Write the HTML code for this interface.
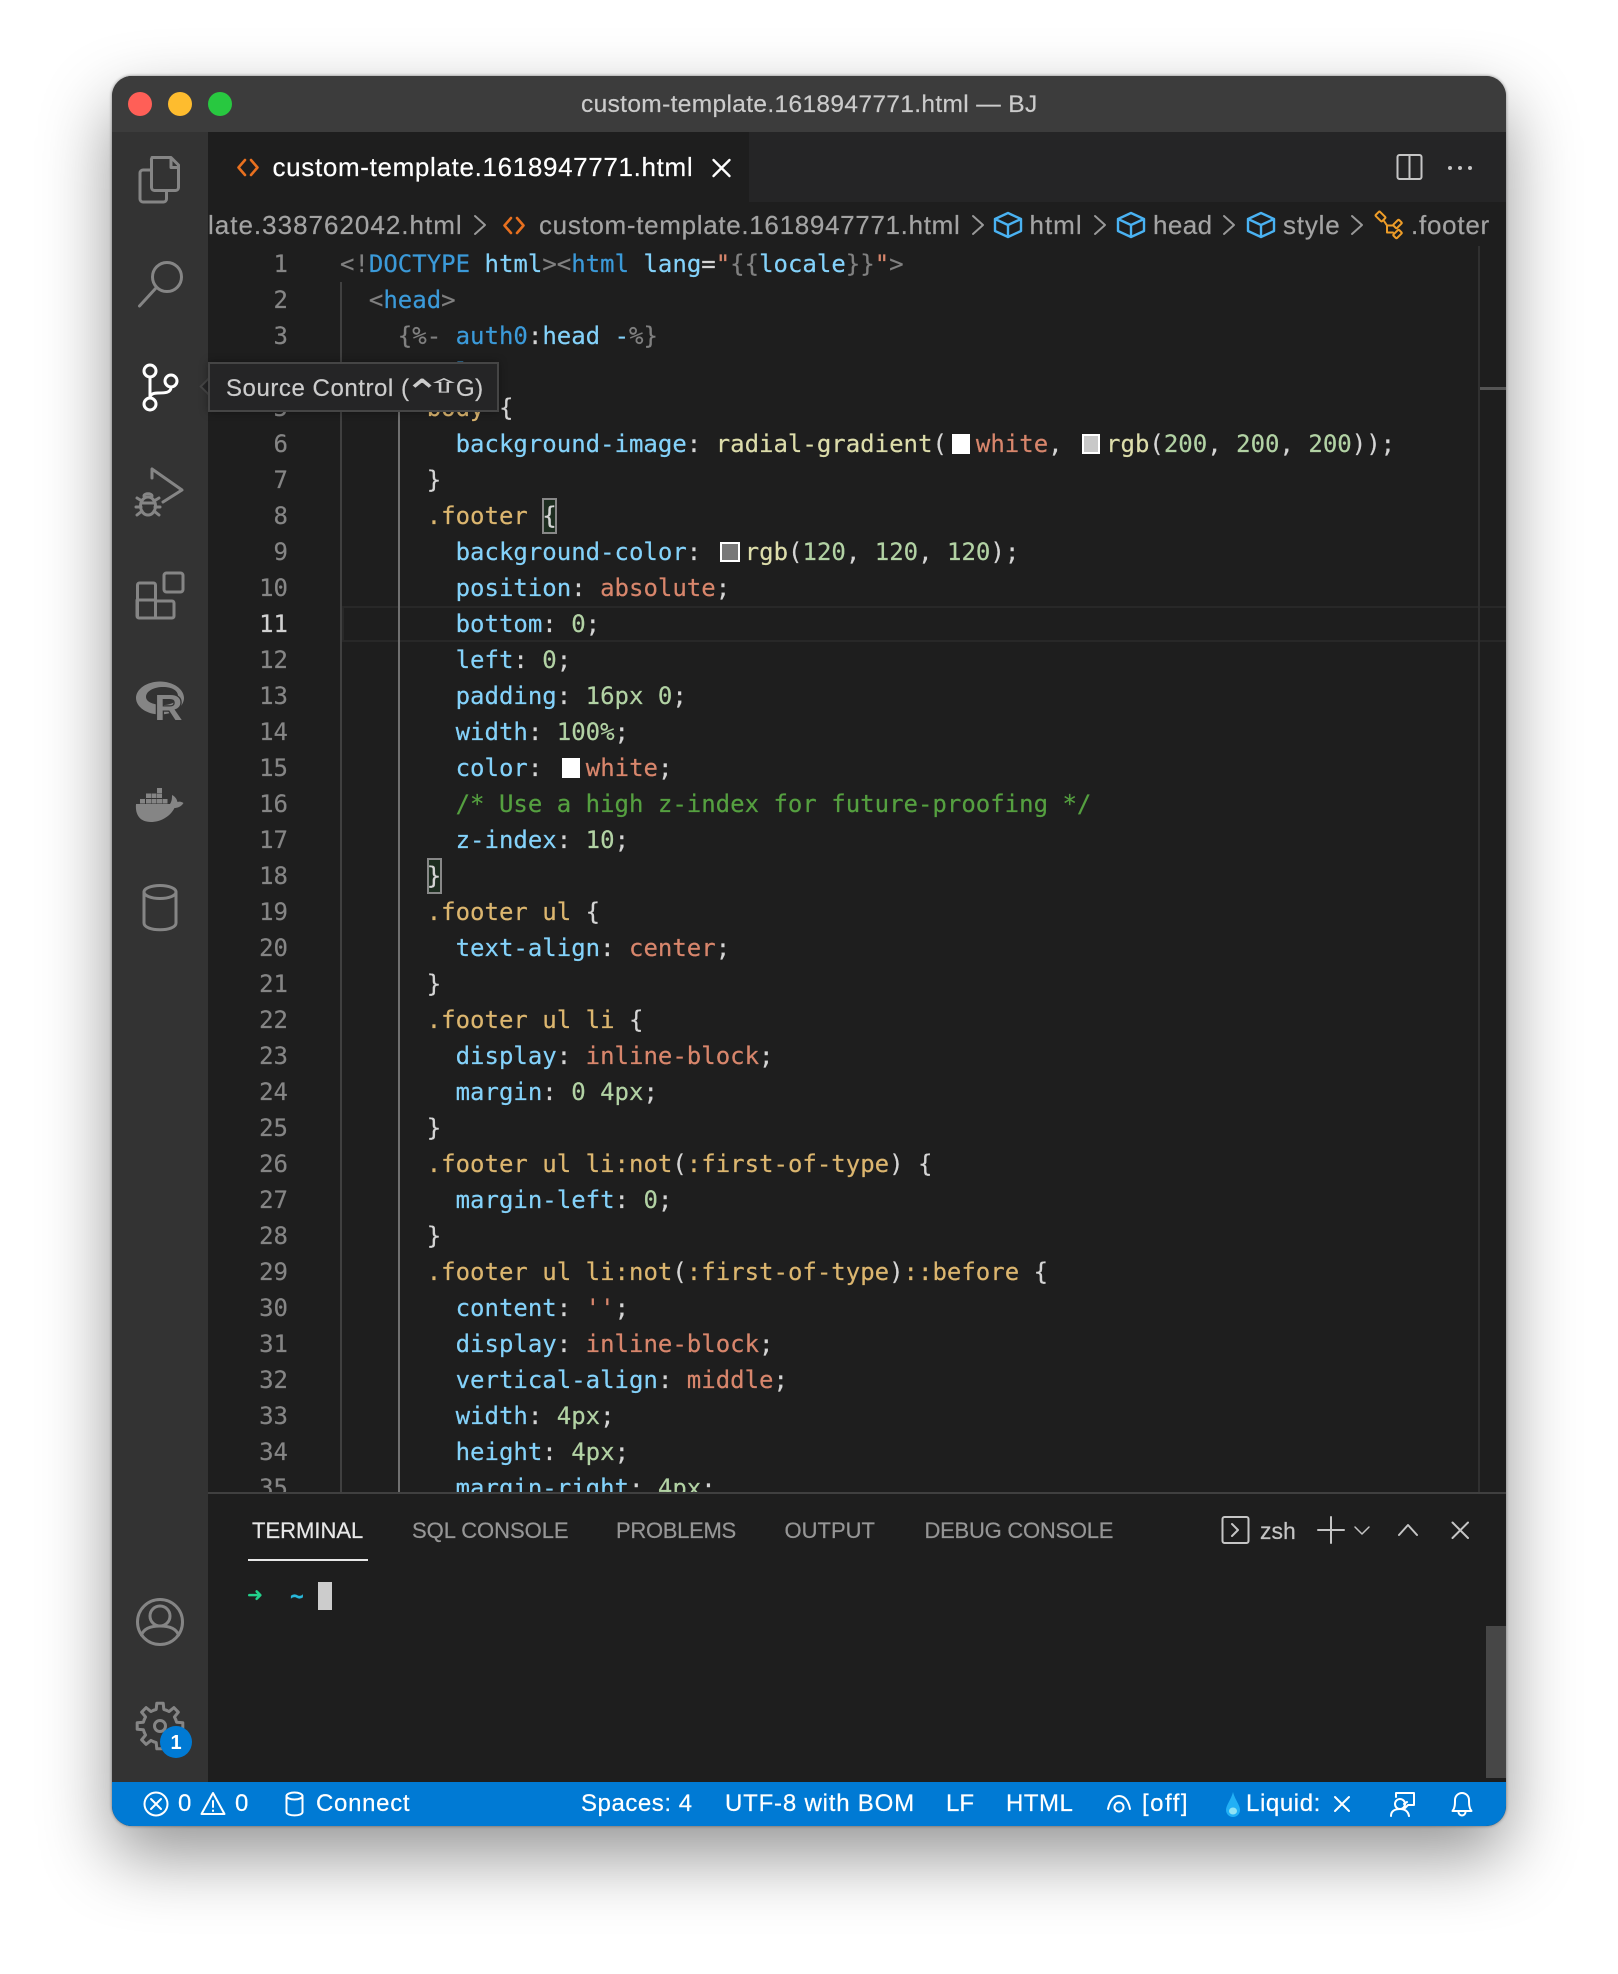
<!DOCTYPE html>
<html lang="en">
<head>
<meta charset="utf-8">
<title>custom-template.1618947771.html — BJ</title>
<style>
html,body{margin:0;padding:0;background:#fff}
body{position:relative;width:1618px;height:1974px;overflow:hidden;font-family:"Liberation Sans",sans-serif}
.a{position:absolute}
#win{left:112px;top:76px;width:1394px;height:1750px;border-radius:20px;background:#1e1e1e;box-shadow:0 30px 70px rgba(0,0,0,.42),0 0 3px rgba(0,0,0,.45)}
.t{position:absolute;white-space:pre;line-height:30px;height:30px;-webkit-text-stroke:.2px}
pre{margin:0;font:24px/36px "DejaVu Sans Mono","Liberation Mono",monospace;font-variant-ligatures:none;-webkit-text-stroke:.2px}
.k{color:#808080}.b{color:#3b9ad9}.l{color:#84d2fa}.w{color:#d4d4d4}.o{color:#d8866c}.n{color:#b2d2a4}.f{color:#dcdcaa}.s{color:#dcb66f}.g{color:#55a040}
.sw{display:inline-block;box-sizing:border-box;width:18px;height:20px;margin:0 6px 0 5px;border:2px solid #fff;vertical-align:-2px}
.u{color:#a3a3a3;font-size:26px}
.st{color:#fff;font-size:24px}
.p{color:#969696;font-size:22px}
</style>
</head>
<body>
<div class="a" id="win"></div>

<div class="a" style="left:112px;top:76px;width:1394px;height:1750px;border-radius:20px;overflow:hidden">
  <div class="a" style="left:0;top:0;width:1394px;height:56px;background:#3c3c3c"></div>
  <div class="a" style="left:0;top:56px;width:96px;height:1650px;background:#333"></div>
  <div class="a" style="left:96px;top:56px;width:1298px;height:70px;background:#252526"></div>
  <div class="a" style="left:96px;top:56px;width:541px;height:70px;background:#1e1e1e"></div>
  <div class="a" style="left:0;top:1706px;width:1394px;height:44px;background:#007ad4"></div>
</div>

<!-- title -->
<div class="t" style="left:581px;top:90px;font-size:24.5px;letter-spacing:.35px;color:#cbcbcb">custom-template.1618947771.html — BJ</div>
<!-- tab -->
<div class="t" style="left:272.500px;top:152px;font-size:26px;letter-spacing:.66px;color:#fff">custom-template.1618947771.html</div>

<!-- breadcrumbs -->
<div class="a" style="left:208px;top:202px;width:1298px;height:44px;overflow:hidden">
  <div class="t u" style="left:0;top:8px;letter-spacing:1px">late.338762042.html</div>
  <div class="t u" style="left:331px;top:8px;letter-spacing:.68px">custom-template.1618947771.html</div>
  <div class="t u" style="left:821.500px;top:8px;letter-spacing:1px">html</div>
  <div class="t u" style="left:945px;top:8px;letter-spacing:.4px">head</div>
  <div class="t u" style="left:1075px;top:8px;letter-spacing:.8px">style</div>
  <div class="t u" style="left:1203px;top:8px;letter-spacing:.75px">.footer</div>
</div>

<!-- editor -->
<div class="a" style="left:208px;top:246px;width:1298px;height:1246px;overflow:hidden;background:#1e1e1e">
  <div class="a" style="left:134px;top:360px;width:1164px;height:36px;box-sizing:border-box;border:2px solid #282828;border-right:0"></div>
  <div class="a" style="left:132px;top:36px;width:2px;height:1210px;background:#404040"></div>
  <div class="a" style="left:190px;top:144px;width:2px;height:1102px;background:#707070"></div>
  <div class="a" style="left:334px;top:252px;width:14.5px;height:36px;box-sizing:border-box;border:2px solid #888;background:#1c2d1f"></div>
  <div class="a" style="left:219px;top:612px;width:15px;height:36px;box-sizing:border-box;border:2px solid #888;background:#1c2d1f"></div>
  <div class="a" style="left:1270px;top:0;width:2px;height:1246px;background:#303030"></div>
  <div class="a" style="left:1272px;top:141px;width:26px;height:3px;background:#555"></div>
  <pre class="a" style="left:0;top:0;width:80px;text-align:right;color:#858585">1
2
3
4
5
6
7
8
9
10
<span style="color:#d0d0d0">11</span>
12
13
14
15
16
17
18
19
20
21
22
23
24
25
26
27
28
29
30
31
32
33
34
35</pre>
  <pre class="a" style="left:132px;top:0;color:#d4d4d4"><span class="k">&lt;!</span><span class="b">DOCTYPE</span> <span class="l">html</span><span class="k">&gt;&lt;</span><span class="b">html</span> <span class="l">lang</span>=<span class="o">"</span><span class="k">{{</span><span class="l">locale</span><span class="k">}}</span><span class="o">"</span><span class="k">&gt;</span>
  <span class="k">&lt;</span><span class="b">head</span><span class="k">&gt;</span>
    <span class="k">{%-</span> <span class="b">auth0</span>:<span class="l">head</span> <span class="l">-</span><span class="k">%}</span>
    <span class="k">&lt;</span><span class="b">style</span><span class="k">&gt;</span>
      <span class="s">body</span> {
        <span class="l">background-image</span>: <span class="f">radial-gradient</span>(<i class="sw" style="background:#fff"></i><span class="o">white</span>, <i class="sw" style="background:#c8c8c8"></i><span class="f">rgb</span>(<span class="n">200</span>, <span class="n">200</span>, <span class="n">200</span>));
      }
      <span class="s">.footer</span> {
        <span class="l">background-color</span>: <i class="sw" style="background:#787878;width:20px;margin:0 5px 0 4px"></i><span class="f">rgb</span>(<span class="n">120</span>, <span class="n">120</span>, <span class="n">120</span>);
        <span class="l">position</span>: <span class="o">absolute</span>;
        <span class="l">bottom</span>: <span class="n">0</span>;
        <span class="l">left</span>: <span class="n">0</span>;
        <span class="l">padding</span>: <span class="n">16px</span> <span class="n">0</span>;
        <span class="l">width</span>: <span class="n">100%</span>;
        <span class="l">color</span>: <i class="sw" style="background:#fff"></i><span class="o">white</span>;
        <span class="g">/* Use a high z-index for future-proofing */</span>
        <span class="l">z-index</span>: <span class="n">10</span>;
      }
      <span class="s">.footer ul</span> {
        <span class="l">text-align</span>: <span class="o">center</span>;
      }
      <span class="s">.footer ul li</span> {
        <span class="l">display</span>: <span class="o">inline-block</span>;
        <span class="l">margin</span>: <span class="n">0</span> <span class="n">4px</span>;
      }
      <span class="s">.footer ul li:not</span>(<span class="s">:first-of-type</span>) {
        <span class="l">margin-left</span>: <span class="n">0</span>;
      }
      <span class="s">.footer ul li:not</span>(<span class="s">:first-of-type</span>)<span class="s">::before</span> {
        <span class="l">content</span>: <span class="o">''</span>;
        <span class="l">display</span>: <span class="o">inline-block</span>;
        <span class="l">vertical-align</span>: <span class="o">middle</span>;
        <span class="l">width</span>: <span class="n">4px</span>;
        <span class="l">height</span>: <span class="n">4px</span>;
        <span class="l">margin-right</span>: <span class="n">4px</span>;</pre>
</div>

<!-- panel -->
<div class="a" style="left:208px;top:1492px;width:1298px;height:2px;background:#404040"></div>
<div class="a" style="left:1486px;top:1626px;width:20px;height:152px;background:#474747"></div>
<div class="t p" style="left:252px;top:1516px;color:#e7e7e7">TERMINAL</div>
<div class="a" style="left:248px;top:1559px;width:120px;height:2px;background:#e7e7e7"></div>
<div class="t p" style="left:412px;top:1516px;letter-spacing:-.03px">SQL CONSOLE</div>
<div class="t p" style="left:616px;top:1516px;letter-spacing:-.3px">PROBLEMS</div>
<div class="t p" style="left:784.500px;top:1516px">OUTPUT</div>
<div class="t p" style="left:924.500px;top:1516px;letter-spacing:-.25px">DEBUG CONSOLE</div>
<div class="t" style="left:1260px;top:1516px;font-size:23px;color:#c5c5c5">zsh</div>
<div class="t" style="left:247px;top:1580px;font:19px/30px 'DejaVu Sans',sans-serif;color:#23d18b">➜</div>
<div class="t" style="left:290px;top:1582px;font:bold 23px/30px 'DejaVu Sans Mono',monospace;color:#29b8db">~</div>
<div class="a" style="left:318px;top:1582px;width:14px;height:28px;background:#ccc"></div>

<!-- status bar text -->
<div class="t st" style="left:178px;top:1789px">0</div>
<div class="t st" style="left:235px;top:1789px">0</div>
<div class="t st" style="left:316px;top:1789px;letter-spacing:.7px">Connect</div>
<div class="t st" style="left:581px;top:1789px;letter-spacing:.55px">Spaces: 4</div>
<div class="t st" style="left:725px;top:1789px;letter-spacing:.8px">UTF-8 with BOM</div>
<div class="t st" style="left:946px;top:1789px">LF</div>
<div class="t st" style="left:1006px;top:1789px;letter-spacing:.5px">HTML</div>
<div class="t st" style="left:1142px;top:1789px;letter-spacing:1.500px">[off]</div>
<div class="t st" style="left:1246px;top:1789px;letter-spacing:.6px">Liquid:</div>

<!-- icons -->
<svg class="a" style="left:0;top:0" width="1618" height="1974" viewBox="0 0 1618 1974" fill="none" stroke-linecap="round" stroke-linejoin="round">
  <circle cx="140" cy="104" r="12" fill="#ff5f57"/>
  <circle cx="180" cy="104" r="12" fill="#febc2e"/>
  <circle cx="220" cy="104" r="12" fill="#28c840"/>

  <g stroke="#858585" stroke-width="3">
    <!-- explorer -->
    <path d="M152 157.5H171L178.5 165V187.500a3 3 0 0 1-3 3H154.500a3 3 0 0 1-3-3V160.500a3 3 0 0 1 1-3Z"/>
    <path d="M171 158V167.500H178"/>
    <path d="M151 170H143a3 3 0 0 0-3 3V199a3 3 0 0 0 3 3H163.500a3 3 0 0 0 3-3V191"/>
    <!-- search -->
    <circle cx="167" cy="277" r="14.500"/>
    <path d="M156 288L139.500 306"/>
    <!-- debug -->
    <path d="M152 469V478M163 502L182 490L152 469"/>
    <ellipse cx="148" cy="506" rx="7.500" ry="9"/>
    <path d="M141 503H155M137 498L142 501M159 498L154 501M136 507H141M160 507H155M137 515L142 511M159 515L154 511M144 496C144 493 152 493 152 496"/>
    <!-- extensions -->
    <rect x="164" y="573" width="19" height="19" rx="2.500"/>
    <path d="M155.500 600H139a2 2 0 0 0-2-0V616a2 2 0 0 0 2 2H172a2 2 0 0 0 2-2V603a2 2 0 0 0-2-2H155.500V585a2 2 0 0 0-2-2H139.500a2 2 0 0 0-2 2V616M155.500 600V618"/>
    <!-- db -->
    <ellipse cx="160" cy="892" rx="16" ry="6.500"/>
    <path d="M144 892V923C144 932 176 932 176 923V892"/>
    <!-- account -->
    <circle cx="160" cy="1622" r="22.500"/>
    <circle cx="160" cy="1616" r="10"/>
    <path d="M141.500 1635C144 1628 151 1626 160 1626C169 1626 176 1628 178.500 1635"/>
    <!-- gear -->
    <g transform="translate(160 1726)">
      <path d="M-6.500-15.700L-3.800-16.600L-3.200-22.800H3.200L3.800-16.600L6.500-15.700"/>
      <path transform="rotate(45)" d="M-6.500-15.700L-3.800-16.600L-3.200-22.800H3.200L3.800-16.600L6.500-15.700"/>
      <path transform="rotate(90)" d="M-6.500-15.700L-3.800-16.600L-3.200-22.800H3.200L3.800-16.600L6.500-15.700"/>
      <path transform="rotate(135)" d="M-6.500-15.700L-3.800-16.600L-3.200-22.800H3.200L3.800-16.600L6.500-15.700"/>
      <path transform="rotate(180)" d="M-6.500-15.700L-3.800-16.600L-3.200-22.800H3.200L3.800-16.600L6.500-15.700"/>
      <path transform="rotate(225)" d="M-6.500-15.700L-3.800-16.600L-3.200-22.800H3.200L3.800-16.600L6.500-15.700"/>
      <path transform="rotate(270)" d="M-6.500-15.700L-3.800-16.600L-3.200-22.800H3.200L3.800-16.600L6.500-15.700"/>
      <path transform="rotate(315)" d="M-6.500-15.700L-3.800-16.600L-3.200-22.800H3.200L3.800-16.600L6.500-15.700"/>
      <circle r="5.500"/>
    </g>
  </g>

  <!-- source control -->
  <g stroke="#fff" stroke-width="3">
    <circle cx="150" cy="371" r="6"/>
    <circle cx="171" cy="381" r="6"/>
    <circle cx="150" cy="404" r="6"/>
    <path d="M150 377V398M171 387C171 393 165 393 158 393C154 393 150 394 150 398"/>
  </g>

  <!-- R -->
  <path fill="#858585" fill-rule="evenodd" d="M160 681.500C147 681.500 136 689 136 698C136 707 147 714.500 160 714.500C173 714.500 184 707 184 698C184 689 173 681.500 160 681.500ZM163 687C172 687 178 690.500 178 696C178 701 172 705 163 705C154 705 146 702 146 697C146 691 154 687 163 687Z"/>
  <text x="154.500" y="720" font-family="Liberation Sans" font-weight="700" font-size="36" textLength="28" lengthAdjust="spacingAndGlyphs" fill="#858585" stroke="#333" stroke-width="2.500" paint-order="stroke">R</text>

  <!-- docker -->
  <g fill="#858585">
    <path d="M136 804H170C172 801 172 798 172 795C176 797 177 800 177.500 802C180 801 182 802 183.500 803C181 807 177 808 174.500 808C170 817 160 822 151 822C140 822 135 815 136 804Z"/>
    <rect x="157" y="788" width="5" height="5"/>
    <rect x="146" y="793.500" width="5" height="4.500"/><rect x="151.500" y="793.500" width="5" height="4.500"/><rect x="157" y="793.500" width="5" height="4.500"/>
    <rect x="140" y="799" width="5" height="4.500"/><rect x="146" y="799" width="5" height="4.500"/><rect x="151.500" y="799" width="5" height="4.500"/><rect x="157" y="799" width="5" height="4.500"/><rect x="162.500" y="799" width="5" height="4.500"/>
  </g>

  <!-- badge -->
  <circle cx="176" cy="1742" r="16" fill="#007ad4"/>
  <text x="176" y="1749" text-anchor="middle" font-family="Liberation Sans" font-weight="700" font-size="20" fill="#fff">1</text>

  <!-- file icons -->
  <g stroke="#e8701f" stroke-width="2.600">
    <path d="M245 160L238.500 167.500L245 175M251 160L257.500 167.500L251 175"/>
    <path d="M511 218L504.500 225.500L511 233M517 218L523.500 225.500L517 233"/>
  </g>
  <path d="M713.500 160L729.500 176M729.500 160L713.500 176" stroke="#fff" stroke-width="2.400"/>

  <!-- editor actions -->
  <rect x="1397.500" y="155" width="24" height="24" rx="2" stroke="#c5c5c5" stroke-width="2"/>
  <path d="M1409.500 155V179" stroke="#c5c5c5" stroke-width="2"/>
  <g fill="#c5c5c5"><circle cx="1450" cy="168" r="2"/><circle cx="1460" cy="168" r="2"/><circle cx="1470" cy="168" r="2"/></g>

  <!-- breadcrumb chevrons -->
  <g stroke="#999" stroke-width="2">
    <path d="M475 216L485 225L475 234"/>
    <path d="M973 216L983 225L973 234"/>
    <path d="M1095 216L1105 225L1095 234"/>
    <path d="M1224 216L1234 225L1224 234"/>
    <path d="M1352 216L1362 225L1352 234"/>
  </g>
  <g stroke="#4ab2f2" stroke-width="2.400">
    <g transform="translate(1008 225)"><path d="M0-12L13-6V6L0 12L-13 6V-6ZM-13-6L0 0L13-6M0 0V12"/></g>
    <g transform="translate(1131 225)"><path d="M0-12L13-6V6L0 12L-13 6V-6ZM-13-6L0 0L13-6M0 0V12"/></g>
    <g transform="translate(1261 225)"><path d="M0-12L13-6V6L0 12L-13 6V-6ZM-13-6L0 0L13-6M0 0V12"/></g>
  </g>
  <g stroke="#ee9d28" stroke-width="2">
    <rect x="-4.500" y="-3" width="9" height="6" rx="1" transform="translate(1380.500 216.500) rotate(45)"/>
    <rect x="-4" y="-2.500" width="8" height="5" rx="1" transform="translate(1397.500 224) rotate(-45)"/>
    <rect x="-4" y="-2.500" width="8" height="5" rx="1" transform="translate(1397.500 234) rotate(-45)"/>
    <path d="M1384 221L1387 225.500H1393M1387 225.500V232.500H1393"/>
  </g>

  <!-- panel actions -->
  <g stroke="#c5c5c5" stroke-width="2">
    <rect x="1222.500" y="1517" width="26" height="26" rx="2"/>
    <path d="M1232 1524L1238 1530L1232 1536"/>
    <path d="M1318 1530H1344M1331 1517V1543"/>
    <path d="M1355 1527L1362 1534L1369 1527" stroke-width="1.500"/>
    <path d="M1399 1535L1408 1525L1417 1535"/>
    <path d="M1452.500 1522.500L1468 1538M1468 1522.500L1452.500 1538"/>
  </g>

  <!-- status icons -->
  <g stroke="#fff" stroke-width="2">
    <circle cx="156" cy="1804" r="11.500"/>
    <path d="M151 1799L161 1809M161 1799L151 1809"/>
    <path d="M213 1793L224.500 1814H201.500Z"/>
    <path d="M213 1801V1807M213 1810.500V1811"/>
    <ellipse cx="294.500" cy="1796" rx="8" ry="3.500"/>
    <path d="M286.500 1796V1812C286.500 1816.500 302.500 1816.500 302.500 1812V1796"/>
    <path d="M1108 1809C1110 1799 1115 1796 1119 1796C1124 1796 1128 1799 1130 1809"/>
    <circle cx="1119" cy="1807" r="4.500"/>
    <path d="M1335 1797L1349 1811M1349 1797L1335 1811"/>
    <path d="M1396 1797V1793H1414V1805H1408L1405 1808M1404 1804L1407 1802"/>
    <circle cx="1400" cy="1804" r="5"/>
    <path d="M1391 1816C1391 1811 1395 1809 1400 1809C1405 1809 1408 1811 1409 1816"/>
    <path d="M1452.500 1811C1455 1808 1455 1804 1455 1800A7 7 0 0 1 1469 1800C1469 1804 1469 1808 1471.500 1811Z"/>
    <path d="M1458.500 1812A3.500 3.500 0 0 0 1465.500 1812"/>
  </g>
  <path d="M1233 1792C1235 1800 1240 1805 1240 1810A7 7 0 0 1 1226 1810C1226 1805 1231 1800 1233 1792Z" fill="#22b0f5"/>
  <ellipse cx="1233" cy="1811" rx="4" ry="3.500" fill="#8fe3f5"/>
</svg>

<!-- tooltip -->
<div class="a" style="left:202px;top:380px;width:13px;height:13px;background:#252526;border:2px solid #454545;box-sizing:border-box;transform:rotate(45deg);border-top-color:#454545;border-right-color:transparent"></div>
<div class="a" style="left:208px;top:362px;width:291px;height:50px;box-sizing:border-box;background:#252526;border:2px solid #454545;box-shadow:0 0 8px rgba(0,0,0,.36)"></div>
<div class="t" style="left:226px;top:374px;font-size:24px;letter-spacing:.55px;color:#cccccc">Source Control (</div>
<div class="t" style="left:404px;top:378px;font-size:36px;color:#cccccc;transform:scaleX(1.2);transform-origin:0 0">⌃</div>
<div class="t" style="left:425.500px;top:375px;font-size:24px;color:#cccccc;transform:scale(1.8,.8);transform-origin:0 0">⇧</div>
<div class="t" style="left:456px;top:374px;font-size:24px;letter-spacing:.5px;color:#cccccc">G)</div>
</body>
</html>
